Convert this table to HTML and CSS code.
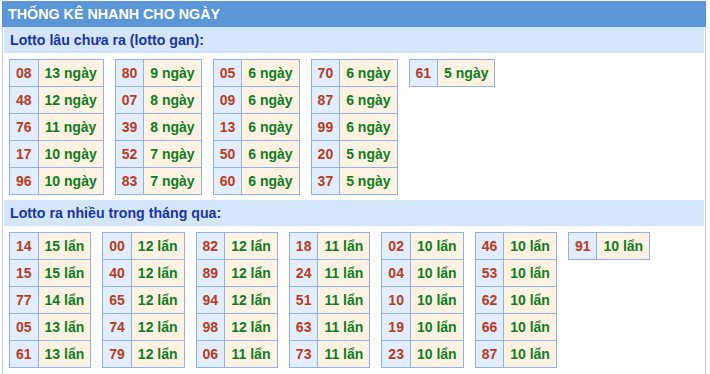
FILE: index.html
```html
<!DOCTYPE html>
<html lang="vi">
<head>
<meta charset="utf-8">
<title>Thống kê nhanh</title>
<link rel="stylesheet" href="styles.css">
</head>
<body>
<div class="wrap">
  <div class="hd">THỐNG KÊ NHANH CHO NGÀY</div>
  <div class="box">
    <div class="sub">Lotto lâu chưa ra (lotto gan):</div>
    <div class="tables">
      <table><tr><td class="n">08</td><td class="v">13 ngày</td></tr><tr><td class="n">48</td><td class="v">12 ngày</td></tr><tr><td class="n">76</td><td class="v">11 ngày</td></tr><tr><td class="n">17</td><td class="v">10 ngày</td></tr><tr><td class="n">96</td><td class="v">10 ngày</td></tr></table>
      <table><tr><td class="n">80</td><td class="v">9 ngày</td></tr><tr><td class="n">07</td><td class="v">8 ngày</td></tr><tr><td class="n">39</td><td class="v">8 ngày</td></tr><tr><td class="n">52</td><td class="v">7 ngày</td></tr><tr><td class="n">83</td><td class="v">7 ngày</td></tr></table>
      <table><tr><td class="n">05</td><td class="v">6 ngày</td></tr><tr><td class="n">09</td><td class="v">6 ngày</td></tr><tr><td class="n">13</td><td class="v">6 ngày</td></tr><tr><td class="n">50</td><td class="v">6 ngày</td></tr><tr><td class="n">60</td><td class="v">6 ngày</td></tr></table>
      <table><tr><td class="n">70</td><td class="v">6 ngày</td></tr><tr><td class="n">87</td><td class="v">6 ngày</td></tr><tr><td class="n">99</td><td class="v">6 ngày</td></tr><tr><td class="n">20</td><td class="v">5 ngày</td></tr><tr><td class="n">37</td><td class="v">5 ngày</td></tr></table>
      <table><tr><td class="n">61</td><td class="v">5 ngày</td></tr></table>
    </div>
    <div class="sub">Lotto ra nhiều trong tháng qua:</div>
    <div class="tables">
      <table><tr><td class="n">14</td><td class="v">15 lẩn</td></tr><tr><td class="n">15</td><td class="v">15 lẩn</td></tr><tr><td class="n">77</td><td class="v">14 lẩn</td></tr><tr><td class="n">05</td><td class="v">13 lẩn</td></tr><tr><td class="n">61</td><td class="v">13 lẩn</td></tr></table>
      <table><tr><td class="n">00</td><td class="v">12 lẩn</td></tr><tr><td class="n">40</td><td class="v">12 lẩn</td></tr><tr><td class="n">65</td><td class="v">12 lẩn</td></tr><tr><td class="n">74</td><td class="v">12 lẩn</td></tr><tr><td class="n">79</td><td class="v">12 lẩn</td></tr></table>
      <table><tr><td class="n">82</td><td class="v">12 lẩn</td></tr><tr><td class="n">89</td><td class="v">12 lẩn</td></tr><tr><td class="n">94</td><td class="v">12 lẩn</td></tr><tr><td class="n">98</td><td class="v">12 lẩn</td></tr><tr><td class="n">06</td><td class="v">11 lẩn</td></tr></table>
      <table><tr><td class="n">18</td><td class="v">11 lẩn</td></tr><tr><td class="n">24</td><td class="v">11 lẩn</td></tr><tr><td class="n">51</td><td class="v">11 lẩn</td></tr><tr><td class="n">63</td><td class="v">11 lẩn</td></tr><tr><td class="n">73</td><td class="v">11 lẩn</td></tr></table>
      <table><tr><td class="n">02</td><td class="v">10 lẩn</td></tr><tr><td class="n">04</td><td class="v">10 lẩn</td></tr><tr><td class="n">10</td><td class="v">10 lẩn</td></tr><tr><td class="n">19</td><td class="v">10 lẩn</td></tr><tr><td class="n">23</td><td class="v">10 lẩn</td></tr></table>
      <table><tr><td class="n">46</td><td class="v">10 lẩn</td></tr><tr><td class="n">53</td><td class="v">10 lẩn</td></tr><tr><td class="n">62</td><td class="v">10 lẩn</td></tr><tr><td class="n">66</td><td class="v">10 lẩn</td></tr><tr><td class="n">87</td><td class="v">10 lẩn</td></tr></table>
      <table><tr><td class="n">91</td><td class="v">10 lẩn</td></tr></table>
    </div>
  </div>
</div>
</body>
</html>
```

FILE: styles.css
```css
html, body {
  margin: 0;
  padding: 0;
  background: #ffffff;
}
body {
  font-family: "Liberation Sans", Arial, sans-serif;
  font-weight: bold;
  font-size: 14px;
}
.wrap {
  margin: 1px 0 0 2px;
  width: 704px;
}
.hd {
  height: 26px;
  line-height: 26px;
  background: #5b97d8;
  color: #ffffff;
  padding-left: 6px;
  font-size: 14.3px;
}
.box {
  border: 1px solid #c3d1e2;
  border-top: none;
  padding: 0 1px 20px 1px;
}
.sub {
  height: 26px;
  line-height: 26px;
  background: #d3e6fb;
  color: #1b33a6;
  padding-left: 6px;
  font-size: 14.2px;
}
.tables {
  display: flex;
  align-items: flex-start;
  gap: 11px;
  padding: 6px 0 5px 5px;
}
table {
  border-collapse: collapse;
  border: 1px solid #8fb1ef;
}
td {
  border: 1px solid #8fb1ef;
  height: 26px;
  padding: 0 6px;
  text-align: center;
  white-space: nowrap;
  line-height: 16px;
}
td.n {
  background: #e2eefd;
  color: #b93c1d;
}
td.v {
  background: #fef3e2;
  color: #0e7d22;
}
```
